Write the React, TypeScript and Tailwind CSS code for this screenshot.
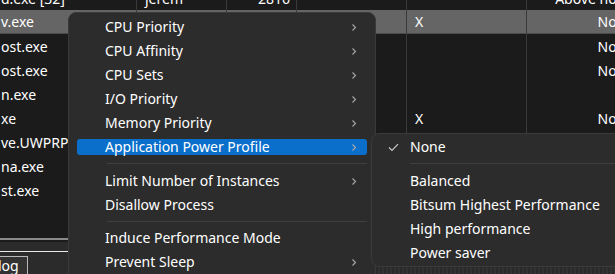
import type { ReactNode } from "react";

type Row = {
  name: string;
  user?: string;
  num?: string;
  x?: boolean;
  prio?: string;
  selected?: boolean;
};

const rows: Row[] = [
  { name: "d.exe [32]", user: "jerem", num: "2816", prio: "Above normal" },
  { name: "v.exe", x: true, prio: "Normal", selected: true },
  { name: "ost.exe", prio: "Normal" },
  { name: "ost.exe", prio: "Normal" },
  { name: "n.exe", prio: "High" },
  { name: "xe", x: true, prio: "Normal" },
  { name: "ve.UWPRPC.exe" },
  { name: "na.exe" },
  { name: "st.exe" },
  { name: "" },
];

function Chevron() {
  return (
    <svg width="6" height="9" viewBox="0 0 6 9" fill="none" className="shrink-0">
      <path d="M1.5 1.5 L4.5 4.5 L1.5 7.5" stroke="#a8a8a8" strokeWidth="1.1" />
    </svg>
  );
}

function MenuItem({
  label,
  sub,
  active,
}: {
  label: string;
  sub?: boolean;
  active?: boolean;
}) {
  return (
    <div className="h-[24px] flex items-center px-[8px]">
      <div
        className={`flex-1 h-[16px] flex items-center rounded-[3px] pl-[28px] pr-[10px] ${
          active ? "bg-[#0a6fcb]" : ""
        }`}
      >
        <span className="flex-1 text-[14px] leading-none text-white">{label}</span>
        {sub && <Chevron />}
      </div>
    </div>
  );
}

function Sep({ h }: { h: string }) {
  return (
    <div className={`${h} pt-[4px] pl-[38px] pr-[8px]`}>
      <div className="h-px bg-[#3f3f3f]" />
    </div>
  );
}

function SubItem({ label, checked }: { label: string; checked?: boolean }) {
  return (
    <div className="h-[24px] flex items-center">
      <div className="w-[38px] flex justify-center pl-[4px]">
        {checked && (
          <svg width="11" height="9" viewBox="0 0 11 9" fill="none">
            <path d="M1 4.5 L4 7.5 L10 1.2" stroke="#c8c8c8" strokeWidth="1.2" />
          </svg>
        )}
      </div>
      <span className="text-[14px] leading-none text-white">{label}</span>
    </div>
  );
}

function Cell({
  w,
  children,
  className = "",
}: {
  w: string;
  children?: ReactNode;
  className?: string;
}) {
  return (
    <div className={`${w} shrink-0 h-full flex items-center border-r border-[#3a3a3a] overflow-hidden whitespace-nowrap ${className}`}>
      {children}
    </div>
  );
}

export default function App() {
  return (
    <div className="relative w-[615px] h-[274px] overflow-hidden bg-[#1b1b1b] text-white font-['Noto_Sans',sans-serif] text-[14px]">
      {/* process table */}
      <div className="h-[238px] overflow-hidden">
        <div className="mt-[-14px] w-[680px]">
          {rows.map((r, i) => (
            <div
              key={i}
              className={`h-[24px] flex ${r.selected ? "bg-[#656565] border-b border-[#4a4a4a]" : ""}`}
            >
              <Cell w="w-[137px]" className="pl-[1px]">{r.name}</Cell>
              <Cell w="w-[90px]" className="pl-[8px]">{r.user}</Cell>
              <Cell w="w-[70px]" className="justify-end pr-[6px]">{r.num}</Cell>
              <Cell w="w-[110px]" />
              <Cell w="w-[120px]" className="pl-[8px]">{r.x ? "X" : ""}</Cell>
              <Cell w="w-[126px]" className="justify-end pr-[6px] border-r-0">{r.prio}</Cell>
            </div>
          ))}
        </div>
      </div>

      {/* bottom bar */}
      <div className="h-[2px] bg-[#8a8a8a]" />
      <div className="h-[11px] bg-[#2b2b2b] border-t-2 border-[#1b1b1b]" />
      <div className="h-px bg-[#e8e8e8]" />
      <div className="h-[23px] bg-[#2b2b2b] pt-[4px]">
        <div className="w-[28px] h-full bg-[#333] border-t border-r border-[#b8b8b8] flex items-end overflow-hidden">
          <span className="leading-[18px] ml-[-2px]">log</span>
        </div>
      </div>

      {/* shadow strip under submenu */}
      <div className="absolute left-[376px] top-[266px] w-[239px] h-[8px] bg-[repeating-linear-gradient(90deg,#2a2a2a_0px,#2a2a2a_2px,#323232_2px,#323232_4px)]" />
      <div className="absolute left-[374px] top-[261px] w-[3px] h-[3px] bg-white" />

      {/* context menu */}
      <div className="absolute left-[68px] top-[12px] w-[308px] h-[290px] rounded-[8px] bg-[#2c2c2c] border border-[#3a3a3a] pt-[2px]">
        <MenuItem label="CPU Priority" sub />
        <MenuItem label="CPU Affinity" sub />
        <MenuItem label="CPU Sets" sub />
        <MenuItem label="I/O Priority" sub />
        <MenuItem label="Memory Priority" sub />
        <MenuItem label="Application Power Profile" sub active />
        <Sep h="h-[10px]" />
        <MenuItem label="Limit Number of Instances" sub />
        <MenuItem label="Disallow Process" />
        <Sep h="h-[9px]" />
        <MenuItem label="Induce Performance Mode" />
        <MenuItem label="Prevent Sleep" sub />
      </div>

      {/* submenu */}
      <div className="absolute left-[371px] top-[133px] w-[260px] h-[134px] rounded-[8px] bg-[#2c2c2c] border border-[#3a3a3a] pt-[1px]">
        <SubItem label="None" checked />
        <div className="h-[10px] pt-[4px] pl-[38px]">
          <div className="h-px bg-[#3f3f3f]" />
        </div>
        <SubItem label="Balanced" />
        <SubItem label="Bitsum Highest Performance" />
        <SubItem label="High performance" />
        <SubItem label="Power saver" />
      </div>
    </div>
  );
}
